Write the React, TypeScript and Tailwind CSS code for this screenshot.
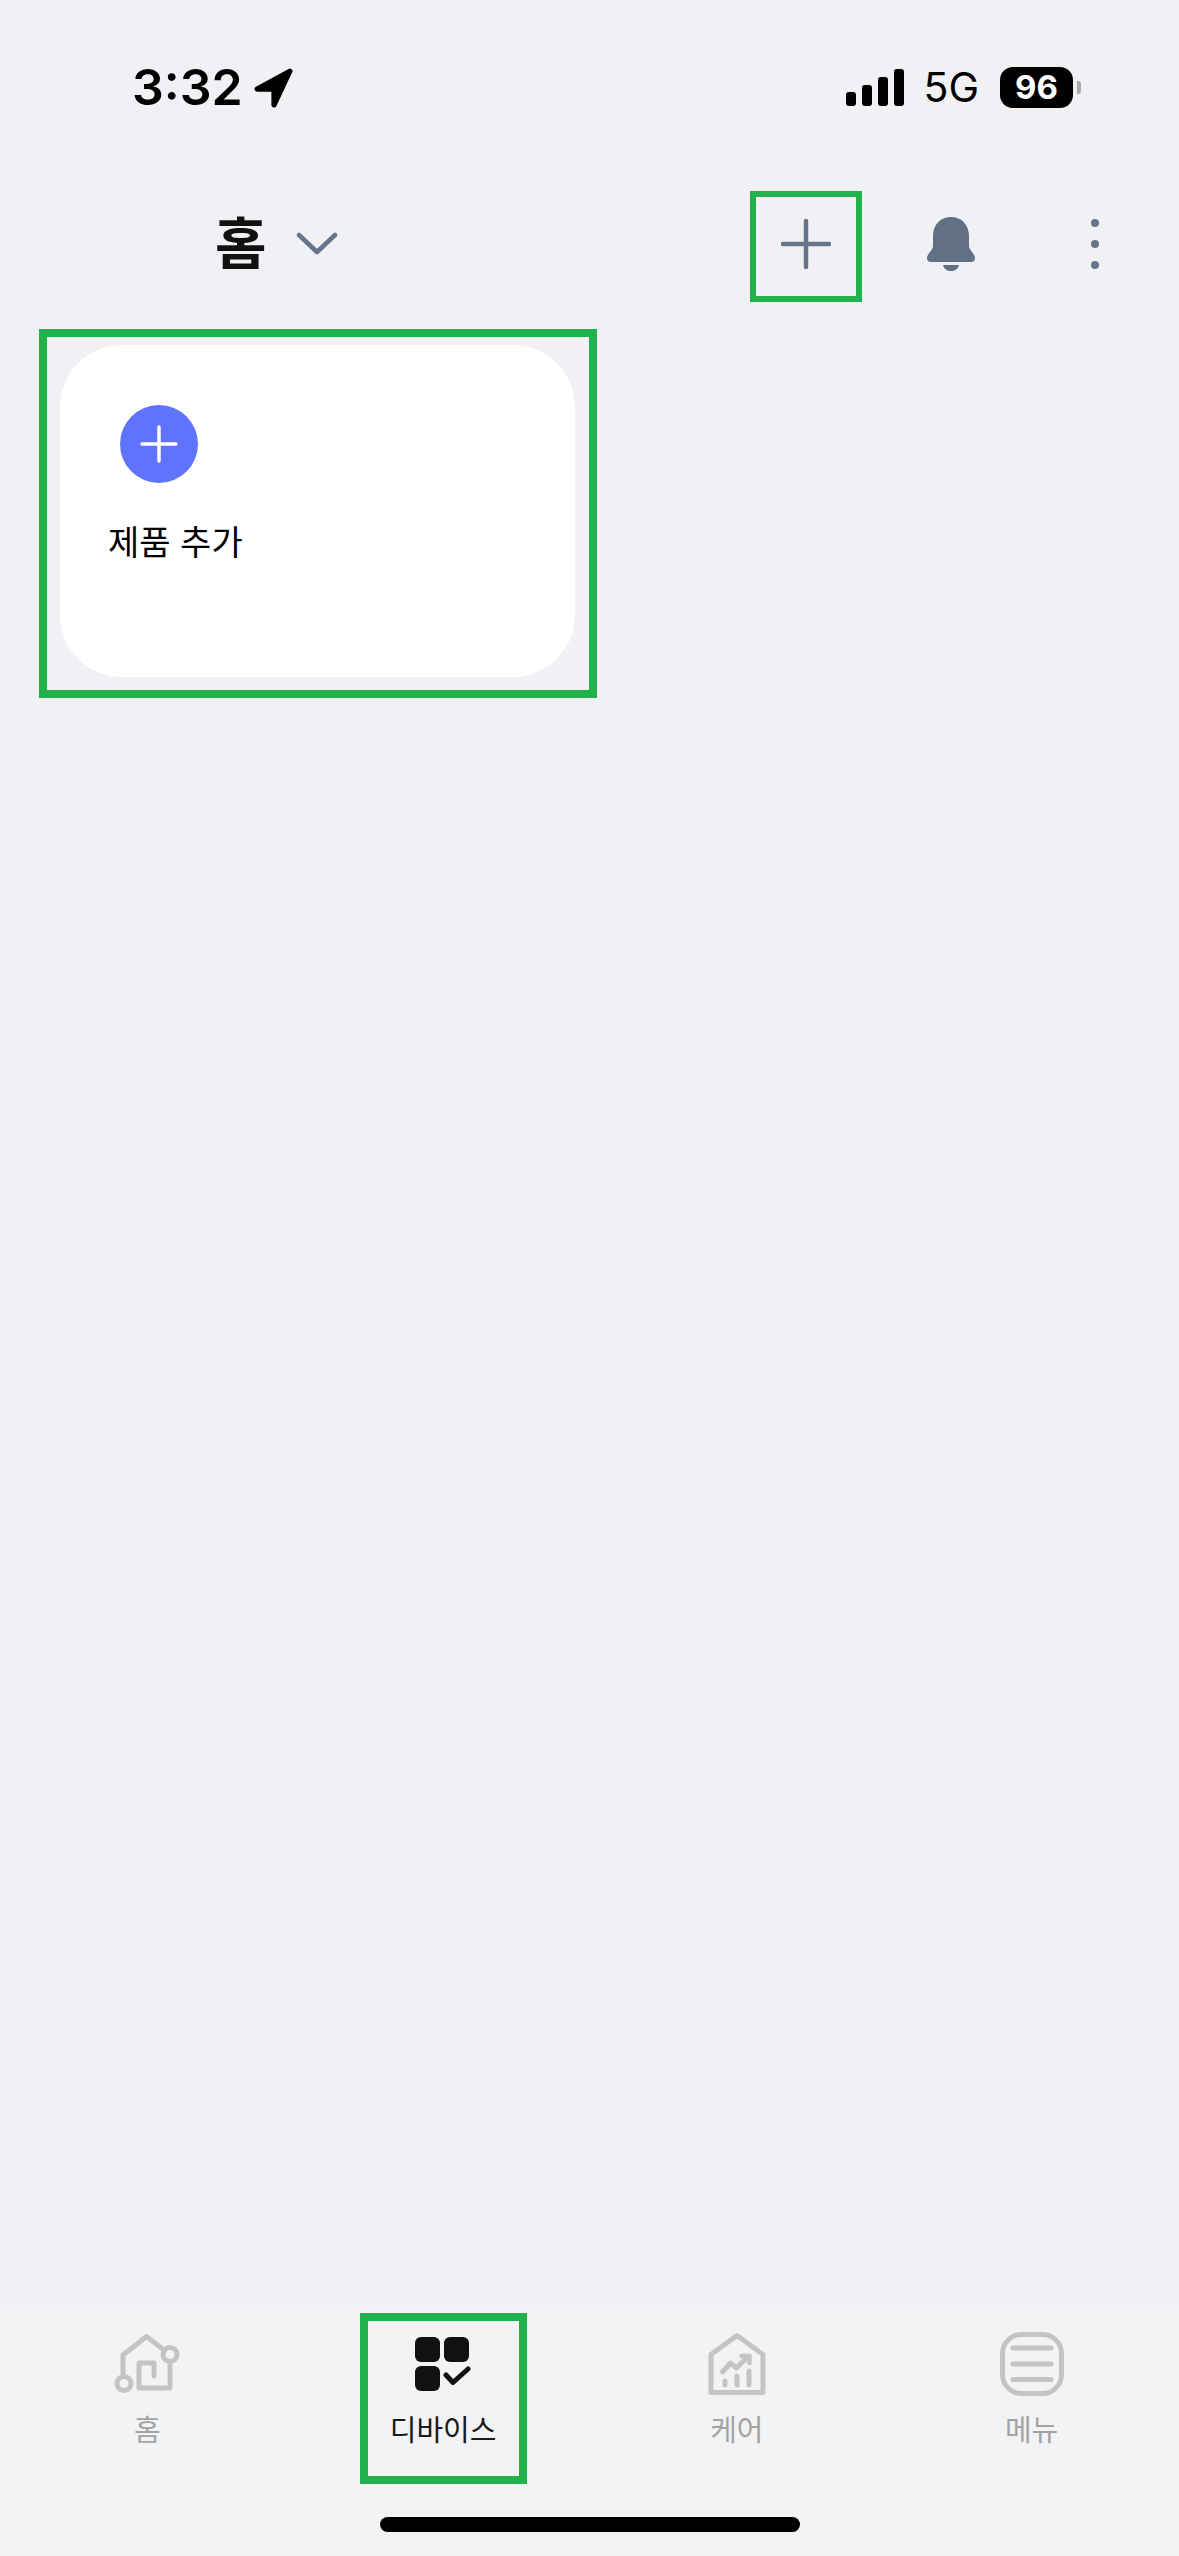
const KR = "font-['Inter','Noto_Sans_CJK_KR',sans-serif]";

function HomeIcon() {
  return (
    <svg width="70" height="66" viewBox="12 20 70 66" fill="none" stroke="#c4c4c4" strokeWidth="5" strokeLinecap="round" strokeLinejoin="round">
      <path d="M23 64V44L46.5 25.5L64 39" />
      <circle cx="24" cy="72.5" r="7" />
      <circle cx="70" cy="43.5" r="7" />
      <path d="M70 51V77H39V52H54V65" />
    </svg>
  );
}

function DevicesIcon() {
  return (
    <svg width="56" height="56" viewBox="0 0 56 56" fill="#111111">
      <rect x="0" y="0" width="25" height="25" rx="6" />
      <rect x="29" y="0" width="25" height="25" rx="6" />
      <rect x="0" y="29" width="25" height="25" rx="6" />
      <path d="M31 38L38 45.5L53 32" fill="none" stroke="#111111" strokeWidth="5" strokeLinecap="round" strokeLinejoin="round" />
    </svg>
  );
}

function CareIcon() {
  return (
    <svg width="60" height="66" viewBox="17.5 21 60 66" fill="none" stroke="#c4c4c4" strokeWidth="5" strokeLinecap="round" strokeLinejoin="round">
      <path d="M21.5 44.5L47.5 25.5L73.5 44.5V82.5H21.5Z" />
      <path d="M33 62L41 53L47 58L58 47" />
      <path d="M52 46H60V53" strokeWidth="4.5" />
      <path d="M35.5 71V75M47.5 66V75M59.5 61V75" strokeWidth="5" />
    </svg>
  );
}

function MenuIcon() {
  return (
    <svg width="64" height="64" viewBox="0 0 64 64" fill="none" stroke="#c4c4c4" strokeLinecap="round">
      <rect x="2.5" y="2.5" width="59" height="59" rx="19" strokeWidth="5" />
      <path d="M13 16H51M13 32H51M13 47.5H51" strokeWidth="5" />
    </svg>
  );
}

function Tab({ label, active, children }: { label: string; active?: boolean; children: React.ReactNode }) {
  return (
    <div className="flex-1 flex flex-col items-center">
      <div className={active
        ? "flex flex-col items-center w-[167px] h-[176px] ml-[2px] border-8 border-[#22b24c] -mt-[18px] pt-[11px]"
        : "flex flex-col items-center h-[153px]"}>
        <div className="h-[66px] flex items-center justify-center">{children}</div>
        <span className={`text-[29px] leading-[40px] ${active ? "mt-[13px] text-[#1a1a1a]" : "mt-[14px] text-[#a3a3a3]"}`}>{label}</span>
      </div>
    </div>
  );
}

export default function App() {
  return (
    <div className={`w-[1179px] h-[2556px] bg-[#f0f1f5] flex flex-col overflow-hidden ${KR}`}>
      {/* status bar */}
      <div className="h-[174px] mb-[17px] flex items-center pl-[132px] pr-[98px] text-black">
        <span className="text-[50px] leading-none font-semibold font-['Inter']">3:32</span>
        <svg className="ml-[10px]" width="41" height="41" viewBox="0 0 39 39" fill="#000" stroke="#000" strokeWidth="5" strokeLinejoin="round">
          <path d="M35 4L4 21H20V36Z" />
        </svg>
        <div className="ml-auto flex items-end gap-[6px] h-[37px]">
          <div className="w-[10px] h-[14px] bg-black rounded-[3px]" />
          <div className="w-[10px] h-[21px] bg-black rounded-[3px]" />
          <div className="w-[10px] h-[29px] bg-black rounded-[3px]" />
          <div className="w-[10px] h-[37px] bg-black rounded-[3px]" />
        </div>
        <span className="ml-[19px] text-[41px] leading-none font-['Inter']">5G</span>
        <div className="ml-[21px] w-[73px] h-[41px] bg-black rounded-[13px] flex items-center justify-center text-white text-[33px] font-bold font-['Inter'] leading-none">96</div>
        <div className="ml-[4px] w-[4px] h-[13px] bg-[#aaaaaa] rounded-r-[3px]" />
      </div>

      {/* header */}
      <div className="h-[111px] pb-[6px] flex items-center pl-[215px] pr-[80px]">
        <span className="text-[56px] leading-none font-bold text-[#111111]">홈</span>
        <svg className="ml-[29px]" width="42" height="24" viewBox="0 0 42 24" fill="none" stroke="#64748b" strokeWidth="4.5" strokeLinecap="round" strokeLinejoin="round">
          <path d="M3 3L21 20L39 3" />
        </svg>
        <div className="ml-auto -mb-[6px] w-[112px] h-[111px] border-[6px] border-[#22b24c] flex items-center justify-center pb-[6px]">
          <svg width="50" height="50" viewBox="0 0 50 50" fill="none" stroke="#64748b" strokeWidth="4.5" strokeLinecap="round">
            <path d="M25 2V48M2 25H48" />
          </svg>
        </div>
        <svg className="ml-[65px]" width="48" height="54" viewBox="0 0 48 54" fill="#627084">
          <path d="M24 0C13 0 6 8 6 19V29C6 33 0 37 0 41C0 44 2 45 4 45H44C46 45 48 44 48 41C48 37 42 33 42 29V19C42 8 35 0 24 0Z" />
          <path d="M16 48H32C31 52 28 54 24 54C20 54 17 52 16 48Z" />
        </svg>
        <div className="ml-[116px] flex flex-col gap-[13px]">
          <div className="w-[8px] h-[8px] rounded-full bg-[#64748b]" />
          <div className="w-[8px] h-[8px] rounded-full bg-[#64748b]" />
          <div className="w-[8px] h-[8px] rounded-full bg-[#64748b]" />
        </div>
      </div>

      {/* product card */}
      <div className="mt-[27px] ml-[39px] w-[558px] h-[369px] border-8 border-[#22b24c] pt-[8px] pl-[13px]">
        <div className="w-[515px] h-[332px] bg-white rounded-[62px] pt-[60px] flex flex-col items-start">
          <div className="ml-[60px] w-[78px] h-[78px] rounded-full bg-[#5f73ff] flex items-center justify-center">
            <svg width="38" height="38" viewBox="0 0 38 38" fill="none" stroke="#ffffff" strokeWidth="3.5" strokeLinecap="round">
              <path d="M19 2V36M2 19H36" />
            </svg>
          </div>
          <span className="ml-[48px] mt-[35px] text-[34px] leading-[50px] text-black">제품 추가</span>
        </div>
      </div>

      {/* tab bar */}
      <div className="mt-auto h-[249px] bg-[#f2f3f5] flex flex-col items-center pt-[24px]">
        <div className="w-full flex h-[153px]">
          <Tab label="홈"><HomeIcon /></Tab>
          <Tab label="디바이스" active><DevicesIcon /></Tab>
          <Tab label="케어"><CareIcon /></Tab>
          <Tab label="메뉴"><MenuIcon /></Tab>
        </div>
        <div className="mt-[33px] w-[420px] h-[15px] rounded-full bg-black" />
      </div>
    </div>
  );
}
